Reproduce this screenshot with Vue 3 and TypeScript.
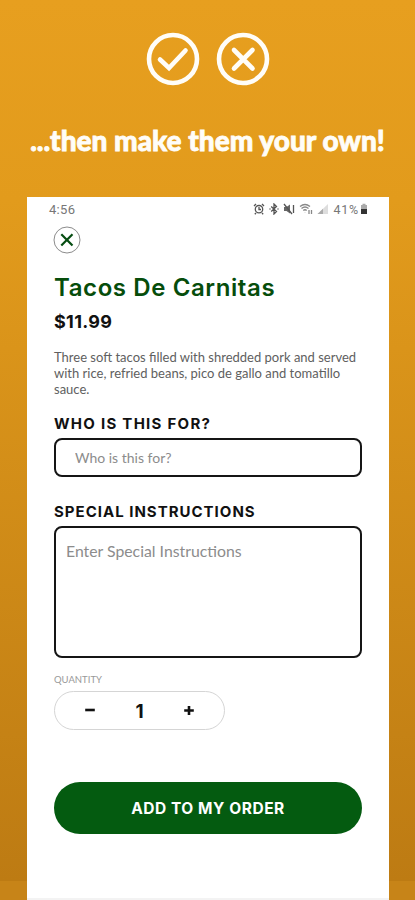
<script setup lang="ts">
import { ref } from 'vue'

const recipient = ref('')
const instructions = ref('')
const quantity = ref(1)
const descriptionLines: string[] = [
  'Three soft tacos filled with shredded pork and served',
  'with rice, refried beans, pico de gallo and tomatillo',
  'sauce.',
]

function decrease(): void {
  if (quantity.value > 1) quantity.value--
}
</script>

<template>
  <main class="page">
    <header class="hero">
      <div class="badges">
        <svg width="54" height="54" viewBox="0 0 54 54">
          <circle cx="27" cy="27" r="24" />
          <path d="M14 27.5 L23 36 L39.5 18.5" />
        </svg>
        <svg width="54" height="54" viewBox="0 0 54 54">
          <circle cx="27" cy="27" r="24" />
          <path d="M18 18 L36.5 36.5 M36.5 18 L18 36.5" />
        </svg>
      </div>
      <h1 class="tagline"><span>...then make them your own!</span></h1>
    </header>

    <section class="phone">
      <div class="status">
        <span class="clock">4:56</span>
        <div class="indicators">
          <svg class="alarm" width="12" height="12" viewBox="0 0 12 12">
            <circle cx="6" cy="6.2" r="3.7" />
            <path d="M1 3 L3 1 M9 1 L11 3 M6 4 V6.5 H8 M3 10 L1.8 11.3 M9 10 L10.2 11.3" />
          </svg>
          <svg class="bluetooth" width="10" height="12" viewBox="0 0 10 12">
            <path d="M2.2 3.5 L7.5 8.5 L5 11 V1 L7.5 3.5 L2.2 8.5 M.5 6 H1.5 M8.5 6 H9.5" />
          </svg>
          <svg class="mute" width="12" height="12" viewBox="0 0 12 12">
            <path class="solid" d="M1 4 H3.5 L7 1.5 V10.5 L3.5 8 H1 Z" />
            <path d="M1 1 L9 11 M10.5 2 V10" />
          </svg>
          <svg class="wifi" width="14" height="12" viewBox="0 0 14 12">
            <path d="M1 3.5 Q6 -.5 11 3.5 M2.5 5.5 Q6 2.5 9.5 5.5 M4.3 7.5 Q6 6 7.7 7.5 M6 9.8 V9.9 M10 7 V11 M12.5 7 V11" />
          </svg>
          <svg class="signal" width="12" height="12" viewBox="0 0 12 12">
            <path d="M.5 11 L11 1 V11 Z" />
            <path class="filled" d="M.5 11 L6 5.8 V11 Z" />
          </svg>
          <span class="percent">41%</span>
          <svg class="battery" width="8" height="12" viewBox="0 0 8 12">
            <path class="cell" d="M1 2 H2.5 V.8 H5.5 V2 H7 V6 H1 Z" />
            <path class="charge" d="M1 6 H7 V11 H1 Z" />
          </svg>
        </div>
      </div>

      <button class="close" aria-label="Close">
        <svg width="28" height="28" viewBox="0 0 28 28">
          <circle cx="14" cy="14" r="13" />
          <path d="M8.3 8.3 L19.5 19.5 M19.5 8.3 L8.3 19.5" />
        </svg>
      </button>

      <h2 class="title">Tacos De Carnitas</h2>
      <p class="price">$11.99</p>
      <p class="description">
        <span v-for="line in descriptionLines" :key="line">{{ line }}</span>
      </p>

      <label class="label who" for="who">WHO IS THIS FOR?</label>
      <input id="who" v-model="recipient" class="field" placeholder="Who is this for?" />

      <label class="label special" for="special">SPECIAL INSTRUCTIONS</label>
      <textarea id="special" v-model="instructions" class="field area" placeholder="Enter Special Instructions"></textarea>

      <p class="caption">QUANTITY</p>
      <div class="stepper">
        <button aria-label="Decrease" @click="decrease">
          <svg width="12" height="12" viewBox="0 0 12 12"><path d="M1.2 5 H10.8" /></svg>
        </button>
        <span class="count">{{ quantity }}</span>
        <button aria-label="Increase" @click="quantity++">
          <svg width="12" height="12" viewBox="0 0 12 12"><path d="M1.2 5.5 H10.8 M6 .9 V10.1" /></svg>
        </button>
      </div>

      <button class="submit">ADD TO MY ORDER</button>
    </section>
  </main>
</template>

<style>
body {
  background: #c98619;
}
</style>

<style scoped>
* {
  box-sizing: border-box;
}

.page {
  display: flex;
  flex-direction: column;
  width: 415px;
  height: 900px;
  overflow: hidden;
  background: linear-gradient(#e79f1f 0, #e29b1c 200px, #bd7b13 881px, #c78418 881px, #c78418 900px);
  font-family: Lato, sans-serif;
}

h1,
h2,
p {
  margin: 0;
}

button {
  padding: 0;
  border: 0;
  background: none;
}

svg {
  display: block;
  flex: none;
  fill: none;
}

.hero {
  flex: none;
  height: 197px;
  padding-top: 32px;
}

.badges {
  display: flex;
  justify-content: center;
  gap: 16.5px;
  padding-left: 1px;
}

.badges svg {
  stroke: #fffdf8;
  stroke-width: 4.6;
  stroke-linecap: round;
}

.tagline {
  margin-top: 36px;
  color: #fffdf8;
  font-size: 28px;
  font-weight: 900;
  line-height: 36px;
  text-align: center;
  white-space: nowrap;
  -webkit-text-stroke: .8px #fffdf8;
}

.phone {
  display: flex;
  flex: 1;
  flex-direction: column;
  width: 362px;
  margin-left: 27px;
  padding: 0 27px;
  border-bottom: 2px solid #f3f3f3;
  background: #fff;
}

.status {
  display: flex;
  align-items: center;
  justify-content: space-between;
  height: 24px;
  margin: 0 -6px 0 -5px;
  color: #777;
  font-family: Roboto, sans-serif;
  font-size: 13px;
}

.clock {
  letter-spacing: .3px;
}

.indicators {
  display: flex;
  align-items: center;
  gap: 4px;
}

.indicators svg {
  stroke: #555;
  stroke-width: 1.3;
}

.mute .solid {
  fill: #666;
  stroke: none;
}

.indicators .wifi {
  stroke: #888;
}

.indicators .signal {
  fill: #ddd;
  stroke: none;
}

.signal .filled {
  fill: #aaa;
}

.indicators .battery {
  margin-left: -3px;
  stroke: none;
}

.battery .cell {
  fill: #aaa;
}

.battery .charge {
  fill: #333;
}

.percent {
  font-size: 12.5px;
  letter-spacing: .8px;
}

.close {
  width: 28px;
  height: 28px;
  margin-top: 5px;
  margin-left: -1px;
}

.close circle {
  stroke: #8c8c8c;
  stroke-width: 1;
}

.close path {
  stroke: #064d12;
  stroke-width: 2.2;
}

.title {
  margin-top: 19px;
  color: #064d0b;
  font-family: Inter, sans-serif;
  font-size: 24px;
  font-weight: 600;
  line-height: 30px;
  letter-spacing: .6px;
  white-space: nowrap;
}

.price {
  margin-top: 7px;
  color: #111;
  font-family: Inter, sans-serif;
  font-size: 18px;
  font-weight: 700;
  line-height: 24px;
  letter-spacing: .3px;
}

.description {
  display: flex;
  flex-direction: column;
  margin-top: 15px;
  color: #606060;
  font-size: 13px;
  line-height: 16px;
  white-space: nowrap;
}

.label {
  color: #111;
  font-family: Inter, sans-serif;
  font-size: 15px;
  font-weight: 700;
  line-height: 20px;
  letter-spacing: 1px;
  white-space: nowrap;
}

.who {
  margin-top: 17px;
  letter-spacing: 1.27px;
}

.field {
  flex: none;
  width: 308px;
  height: 39px;
  margin: 4px 0 0;
  padding: 0 19px;
  border: 2px solid #151515;
  border-radius: 8px;
  outline: 0;
  background: #fff;
  color: #222;
  font-family: Lato, sans-serif;
  font-size: 14px;
}

.field::placeholder {
  color: #8c8c8c;
  opacity: 1;
}

.special {
  margin-top: 25px;
}

.area {
  height: 132px;
  margin-top: 4px;
  padding: 13px 10px;
  font-size: 15.8px;
  line-height: 20px;
  resize: none;
}

.caption {
  margin-top: 15px;
  color: #999;
  font-size: 9.5px;
  line-height: 14px;
}

.stepper {
  display: grid;
  grid-template-columns: 1fr 30px 1fr;
  flex: none;
  align-items: center;
  width: 171px;
  height: 39px;
  margin-top: 4px;
  border: 1px solid #d5d5d5;
  border-radius: 20px;
}

.stepper button {
  justify-self: center;
}

.stepper path {
  stroke: #111;
  stroke-width: 2.6;
}

.count {
  padding-top: 2px;
  color: #111;
  font-family: Inter, sans-serif;
  font-size: 19px;
  font-weight: 700;
  text-align: center;
}

.submit {
  flex: none;
  width: 308px;
  height: 52px;
  margin-top: 52px;
  border-radius: 26px;
  background: #045b10;
  color: #fff;
  font-family: Inter, sans-serif;
  font-size: 15.5px;
  font-weight: 700;
  letter-spacing: .55px;
}
</style>
